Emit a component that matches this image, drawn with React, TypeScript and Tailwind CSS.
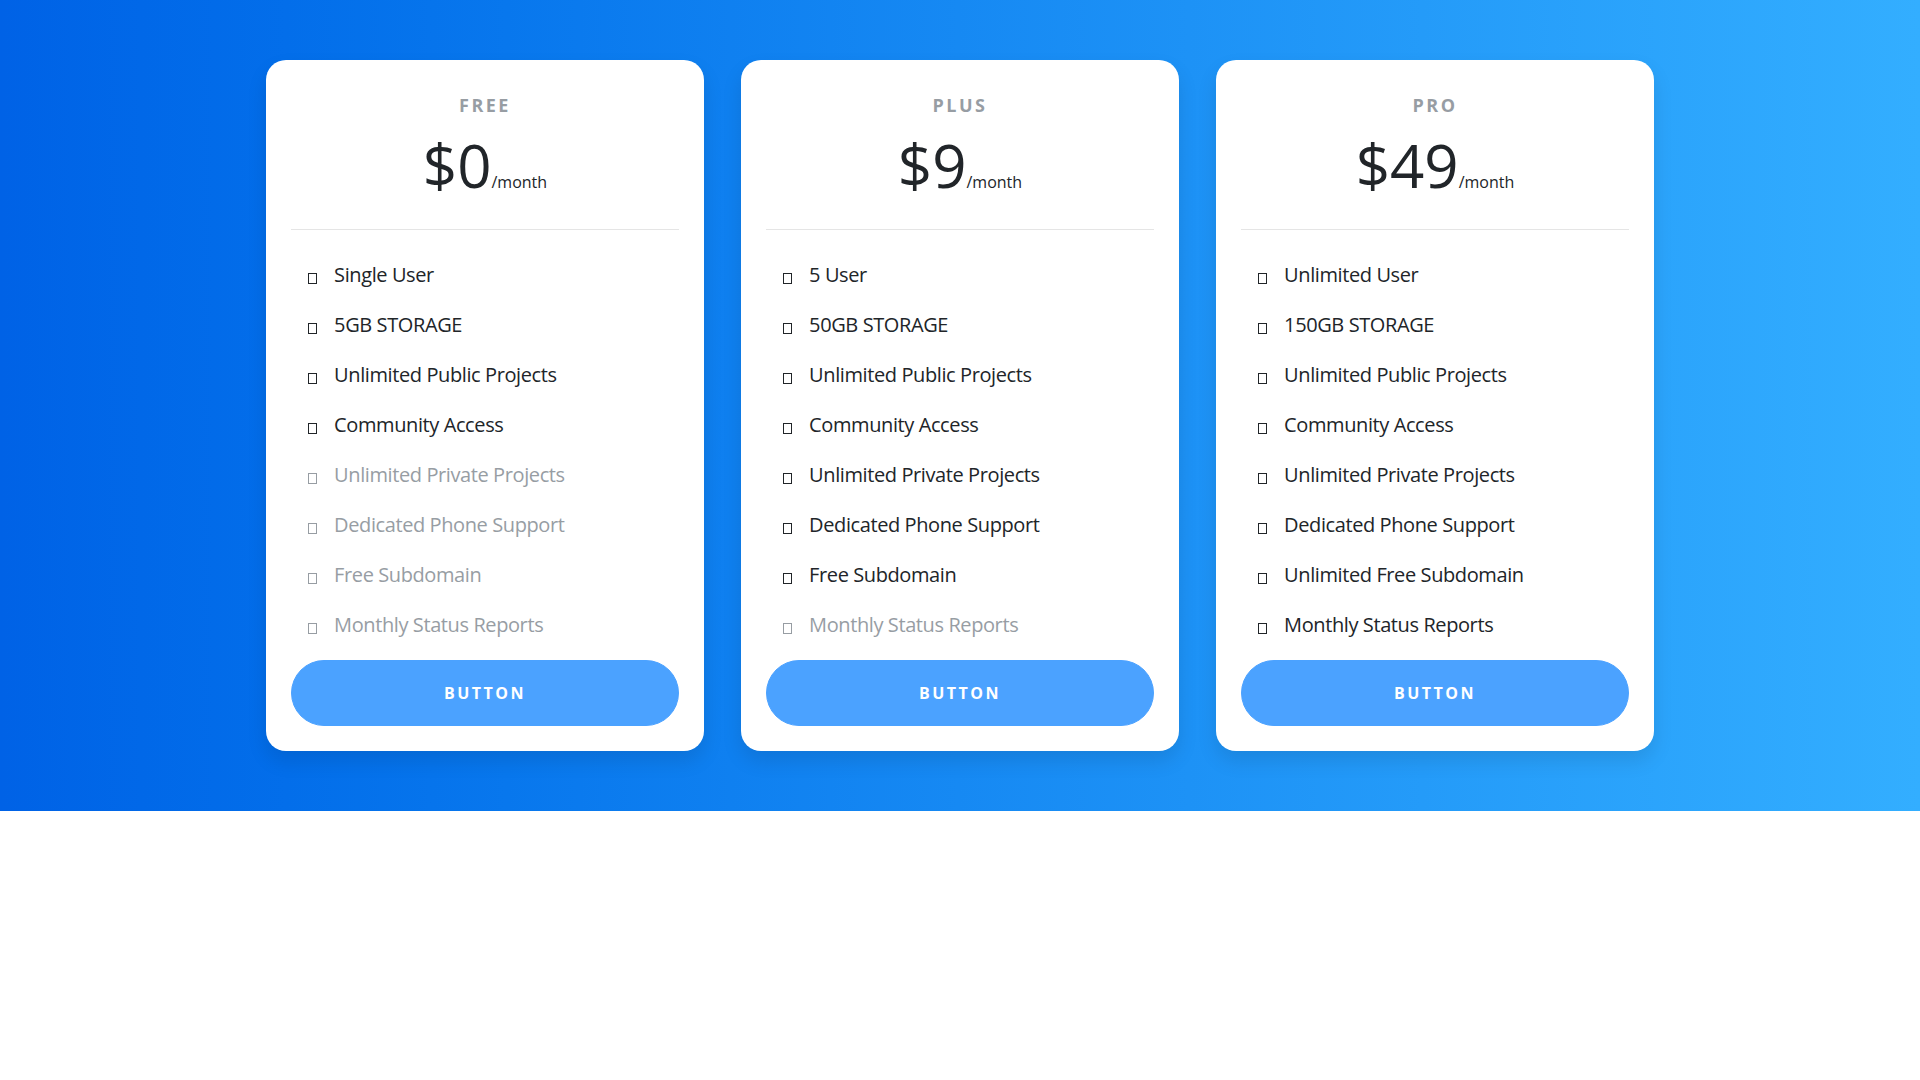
import React from 'react';

type Feature = { label: string; enabled: boolean };

interface Plan {
  name: string;
  price: string;
  features: Feature[];
}

const plans: Plan[] = [
  {
    name: 'Free',
    price: '$0',
    features: [
      { label: 'Single User', enabled: true },
      { label: '5GB STORAGE', enabled: true },
      { label: 'Unlimited Public Projects', enabled: true },
      { label: 'Community Access', enabled: true },
      { label: 'Unlimited Private Projects', enabled: false },
      { label: 'Dedicated Phone Support', enabled: false },
      { label: 'Free Subdomain', enabled: false },
      { label: 'Monthly Status Reports', enabled: false },
    ],
  },
  {
    name: 'Plus',
    price: '$9',
    features: [
      { label: '5 User', enabled: true },
      { label: '50GB STORAGE', enabled: true },
      { label: 'Unlimited Public Projects', enabled: true },
      { label: 'Community Access', enabled: true },
      { label: 'Unlimited Private Projects', enabled: true },
      { label: 'Dedicated Phone Support', enabled: true },
      { label: 'Free Subdomain', enabled: true },
      { label: 'Monthly Status Reports', enabled: false },
    ],
  },
  {
    name: 'Pro',
    price: '$49',
    features: [
      { label: 'Unlimited User', enabled: true },
      { label: '150GB STORAGE', enabled: true },
      { label: 'Unlimited Public Projects', enabled: true },
      { label: 'Community Access', enabled: true },
      { label: 'Unlimited Private Projects', enabled: true },
      { label: 'Dedicated Phone Support', enabled: true },
      { label: 'Unlimited Free Subdomain', enabled: true },
      { label: 'Monthly Status Reports', enabled: true },
    ],
  },
];

function PricingCard({ plan }: { plan: Plan }) {
  return (
    <div className="w-[437.5px] bg-white rounded-[20px] shadow-[0_10px_20px_0_rgba(0,0,0,0.1)] p-[25px]">
      <h5 className="my-[10px] text-center uppercase font-bold text-[18px] leading-[1.2] tracking-[2.5px] text-[#6c757d] opacity-70">
        {plan.name}
      </h5>
      <h6 className="text-center text-[60px] leading-[1.2] text-[#212529] pt-[2px]">
        {plan.price}
        <span className="text-[16px]">/month</span>
      </h6>
      <hr className="mt-[28px] mb-[30px] border-t border-black/10" />
      <ul className="ml-[42.86px] mb-[20px]">
        {plan.features.map((f) => (
          <li
            key={f.label}
            className={`relative mb-[20px] last:mb-0 text-[20px] leading-[30px] tracking-[-0.4px] ${
              f.enabled ? 'text-[#212529]' : 'text-[#6c757d] opacity-70'
            }`}
          >
            <span className="absolute left-[-42.86px] w-[42.86px] top-[13px] flex justify-center">
              <span
                className={`block w-[9px] h-[11px] border ${
                  f.enabled ? 'border-[#212529]' : 'border-[#6c757d]'
                }`}
              />
            </span>
            {f.label}
          </li>
        ))}
      </ul>
      <button className="block w-full rounded-[100px] bg-[#007bff] opacity-70 border border-[#007bff] p-[20px] text-white uppercase font-bold text-[16px] leading-[24px] tracking-[2.5px]">
        Button
      </button>
    </div>
  );
}

export default function App() {
  return (
    <div className="font-['Segoe_UI','Open_Sans',sans-serif]">
      <section className="bg-gradient-to-r from-[#0062E6] to-[#33AEFF] py-[60px]">
        <div className="flex justify-center gap-[37.5px]">
          {plans.map((p) => (
            <PricingCard key={p.name} plan={p} />
          ))}
        </div>
      </section>
    </div>
  );
}
